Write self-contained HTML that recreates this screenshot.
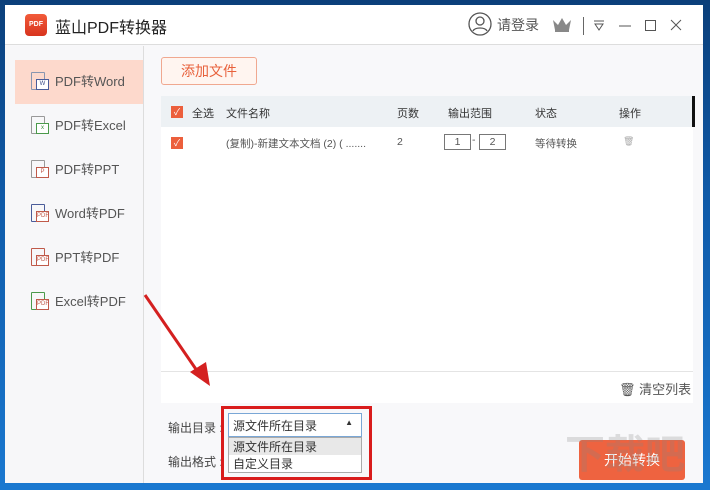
<!DOCTYPE html>
<html><head><meta charset="utf-8"><style>
*{margin:0;padding:0;box-sizing:border-box}
html,body{width:710px;height:490px;overflow:hidden}
body{background:linear-gradient(180deg,#0b3f7a 0%,#0f5aa8 40%,#1a78d0 100%);font-family:"Liberation Sans","Noto Sans CJK SC",sans-serif;position:relative}
.win{position:absolute;left:5px;top:5px;width:698px;height:478px;background:#f8f8fa;overflow:hidden}
.title{position:absolute;left:0;top:0;width:698px;height:40px;background:#fff;border-bottom:1px solid #ddd}
.logo{position:absolute;left:20px;top:9px;width:22px;height:22px;border-radius:4px;background:linear-gradient(#f25b3a,#d8341e);color:#fff;font-size:7px;font-weight:bold;text-align:center;line-height:22px}
.ttxt{position:absolute;left:50px;top:9px;font-size:16px;color:#222}
.side{position:absolute;left:0;top:41px;width:139px;height:437px;background:#f7f7f9;border-right:1px solid #ddd}
.item{position:absolute;left:10px;width:128px;height:44px;font-size:13px;color:#555;line-height:44px;padding-left:40px}
.item.sel{background:#fdd9cc}
.ic{position:absolute;left:16px;top:12px;width:14px;height:18px;border:1px solid #999;border-radius:1px}
.ic b{position:absolute;left:4px;top:6px;width:13px;height:11px;background:#fff;border:1px solid;font-size:6px;line-height:9px;text-align:center;font-weight:normal}
.btn{position:absolute;left:156px;top:52px;width:96px;height:28px;border:1px solid #f0a890;border-radius:3px;background:#fff5f0;color:#e8613c;font-size:14px;text-align:center;line-height:26px}
.tbl{position:absolute;left:156px;top:91px;width:532px;height:307px;background:#fff}
.th{position:absolute;left:0;top:0;width:532px;height:31px;background:#edf1f4;font-size:11px;color:#333}
.th span,.tr span{position:absolute;top:9px}
.tr{position:absolute;left:0;top:31px;width:532px;height:31px;font-size:10.5px;color:#555}
.cb{position:absolute;left:10px;top:10px;width:12px;height:12px;background:#ec5f3c;color:#fff;font-size:9px;line-height:12px;text-align:center}
.box{position:absolute;top:7px;width:27px;height:16px;border:1px solid #777;text-align:center;line-height:14px}
.lbl{position:absolute;font-size:12px;color:#444}
.sel1{position:absolute;left:228px;top:413px;width:134px;height:24px;border:1px solid #7aa7d6;background:#fff;font-size:12px;color:#333;padding:3px 4px}
.dd{position:absolute;left:228px;top:437px;width:134px;height:36px;background:#fff;border:1px solid #aaa;font-size:12px;color:#333}
.red{position:absolute;left:221px;top:406px;width:151px;height:74px;border:3px solid #d91c1c}
.go{position:absolute;left:574px;top:435px;width:106px;height:40px;background:#ee6340;border-radius:3px;color:#fff;font-size:14px;text-align:center;line-height:40px}
.wm{position:absolute;left:560px;top:425px;width:140px;height:50px;overflow:hidden;font-size:40px;line-height:50px;color:rgba(130,130,130,.25);font-weight:bold;white-space:nowrap}
</style></head><body>
<div class="win">
 <div class="title">
  <div class="logo">PDF</div><div class="ttxt">蓝山PDF转换器</div>
  <svg style="position:absolute;left:463px;top:7px" width="24" height="24"><circle cx="12" cy="12" r="11" fill="none" stroke="#555" stroke-width="1.3"/><circle cx="12" cy="9" r="4" fill="none" stroke="#555" stroke-width="1.3"/><path d="M5 19c2-4 12-4 14 0" fill="none" stroke="#555" stroke-width="1.3"/></svg>
  <div style="position:absolute;left:492px;top:10px;font-size:14px;color:#555">请登录</div>
  <svg style="position:absolute;left:547px;top:12px" width="20" height="16"><path d="M1 3l5 5 4-7 4 7 5-5-2 10H3z" fill="#888"/><rect x="3" y="13" width="14" height="2" fill="#888"/></svg>
  <div style="position:absolute;left:578px;top:12px;width:1px;height:18px;background:#666"></div>
  <svg style="position:absolute;left:587px;top:14px" width="110" height="14"><path d="M2 2h10M3 5l4 6 4-6z" fill="none" stroke="#555"/><path d="M27 7h12" stroke="#555"/><rect x="53.5" y="1.5" width="10" height="10" fill="none" stroke="#555"/><path d="M79 1l10 10M89 1l-10 10" stroke="#555"/></svg>
 </div>
 <div class="side">
  <div class="item sel" style="top:14px"><div class="ic" style="border-color:#8896b0"><b style="border-color:#4a5c9a;color:#3a4c8a">W</b></div>PDF转Word</div>
  <div class="item" style="top:58px"><div class="ic"><b style="border-color:#4b9a4b;color:#3a8a3a">x</b></div>PDF转Excel</div>
  <div class="item" style="top:102px"><div class="ic"><b style="border-color:#c05a4a;color:#c05a4a">P</b></div>PDF转PPT</div>
  <div class="item" style="top:146px"><div class="ic" style="border-color:#4a5c9a"><b style="border-color:#c05a4a;color:#c05a4a">PDF</b></div>Word转PDF</div>
  <div class="item" style="top:190px"><div class="ic" style="border-color:#c05a4a"><b style="border-color:#c05a4a;color:#c05a4a">PDF</b></div>PPT转PDF</div>
  <div class="item" style="top:234px"><div class="ic" style="border-color:#4b9a4b"><b style="border-color:#c05a4a;color:#c05a4a">PDF</b></div>Excel转PDF</div>
 </div>
 <div class="btn">添加文件</div>
 <div class="tbl">
  <div class="th"><div class="cb">✓</div><span style="left:31px">全选</span><span style="left:65px">文件名称</span><span style="left:236px">页数</span><span style="left:287px">输出范围</span><span style="left:374px">状态</span><span style="left:458px">操作</span><div style="position:absolute;right:-2px;top:0;width:3px;height:31px;background:#111"></div></div>
  <div class="tr"><div class="cb">✓</div><span style="left:65px">(复制)-新建文本文档 (2) ( .......</span><span style="left:236px">2</span><div class="box" style="left:283px">1</div><span style="left:311px;top:7px">-</span><div class="box" style="left:318px">2</div><span style="left:374px">等待转换</span><span style="left:462px;color:#aaa;font-size:9px">🗑</span></div>
  <div style="position:absolute;left:0;top:275px;width:532px;height:1px;background:#e4e4e4"></div>
  <div style="position:absolute;left:458px;top:283px;font-size:13px;color:#555">🗑 清空列表</div>
 </div>
 <div class="lbl" style="left:163px;top:414px">输出目录 :</div>
 <div class="lbl" style="left:163px;top:448px">输出格式 :</div>
 <div class="go">开始转换</div>
 <div class="wm">下载吧</div>
</div>
<div class="sel1">源文件所在目录<span style="position:absolute;right:8px;top:4px;font-size:8px">▲</span></div>
<div class="dd"><div style="background:#e8e8e8;padding:0 4px;height:17px">源文件所在目录</div><div style="padding:0 4px">自定义目录</div></div>
<div class="red"></div>
<svg style="position:absolute;left:140px;top:290px" width="80" height="100"><path d="M5 5L62 88" stroke="#d42020" stroke-width="3"/><path d="M50 82l20 14-4-24z" fill="#d42020"/></svg>
</body></html>
